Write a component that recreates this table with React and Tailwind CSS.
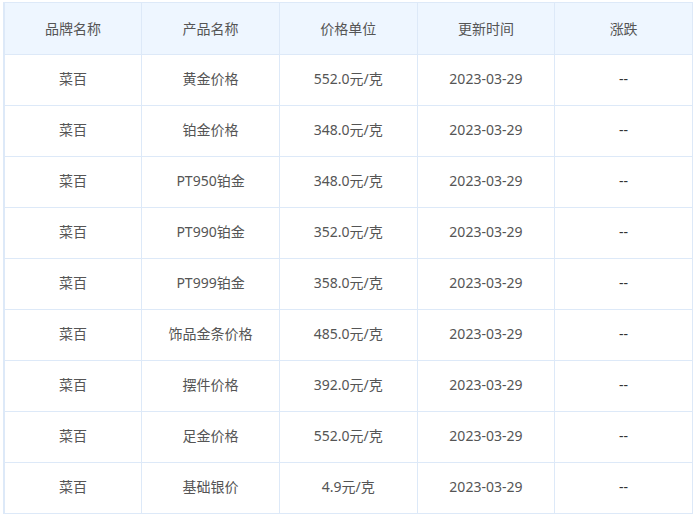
import React from "react";

const rows = [
  ["菜百", "黄金价格", "552.0元/克", "2023-03-29", "--"],
  ["菜百", "铂金价格", "348.0元/克", "2023-03-29", "--"],
  ["菜百", "PT950铂金", "348.0元/克", "2023-03-29", "--"],
  ["菜百", "PT990铂金", "352.0元/克", "2023-03-29", "--"],
  ["菜百", "PT999铂金", "358.0元/克", "2023-03-29", "--"],
  ["菜百", "饰品金条价格", "485.0元/克", "2023-03-29", "--"],
  ["菜百", "摆件价格", "392.0元/克", "2023-03-29", "--"],
  ["菜百", "足金价格", "552.0元/克", "2023-03-29", "--"],
  ["菜百", "基础银价", "4.9元/克", "2023-03-29", "--"],
];

const heads = ["品牌名称", "产品名称", "价格单位", "更新时间", "涨跌"];

function App() {
  return (
    <div className="w-[696px] h-[516px] overflow-hidden bg-white pl-[3px] pt-[2px] font-['Noto_Sans','Noto_Sans_CJK_SC',sans-serif]">
      <table className="w-[690px] table-fixed border-collapse border-l-2 border-[#dde9f8] text-[14px] text-[#555]">
        <thead>
          <tr className="h-[52px] bg-[#eef6ff]">
            {heads.map((h) => (
              <th key={h} className="border border-[#dde9f8] font-normal text-center pb-[1px]">
                {h}
              </th>
            ))}
          </tr>
        </thead>
        <tbody>
          {rows.map((r, i) => (
            <tr key={i} className="h-[51px]">
              {r.map((c, j) => (
                <td
                  key={j}
                  className={`border border-[#dde9f8] text-center pb-[3px] ${j === 4 ? "text-[#333]" : ""}`}
                >
                  {c}
                </td>
              ))}
            </tr>
          ))}
        </tbody>
      </table>
    </div>
  );
}

export default App;
